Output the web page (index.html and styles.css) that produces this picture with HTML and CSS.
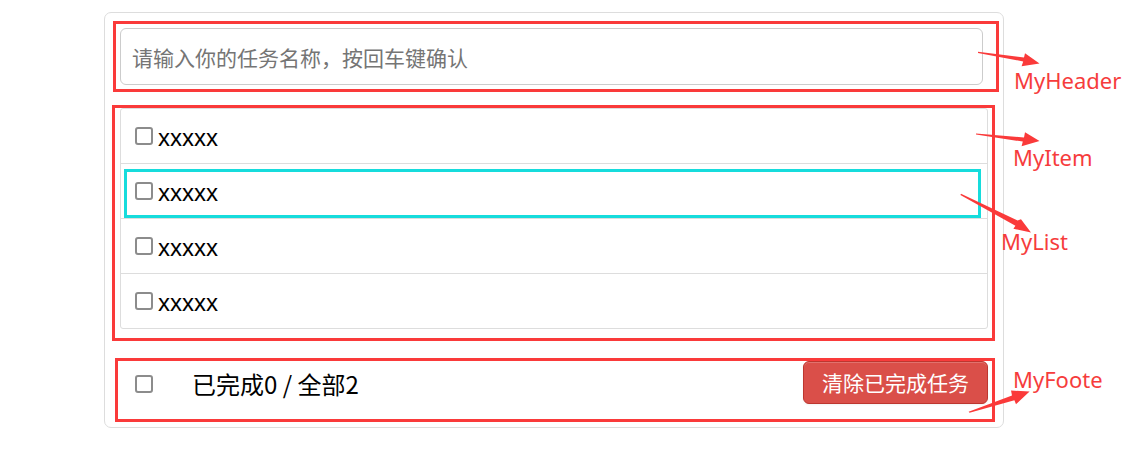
FILE: index.html
```html
<!DOCTYPE html>
<html lang="zh-CN">
<head>
<meta charset="utf-8">
<title>Todo List</title>
<link rel="stylesheet" href="styles.css">
</head>
<body>
<div class="page">
  <div class="todo-wrap">
    <div class="todo-header">
      <input class="todo-input" type="text" placeholder="请输入你的任务名称，按回车键确认">
    </div>
    <ul class="todo-main">
      <li class="todo-item"><input class="check" type="checkbox"><span class="item-text">xxxxx</span></li>
      <li class="todo-item"><input class="check" type="checkbox"><span class="item-text">xxxxx</span></li>
      <li class="todo-item"><input class="check" type="checkbox"><span class="item-text">xxxxx</span></li>
      <li class="todo-item"><input class="check" type="checkbox"><span class="item-text">xxxxx</span></li>
    </ul>
    <div class="todo-footer">
      <input class="check footer-check" type="checkbox">
      <span class="footer-text">已完成0 / 全部2</span>
      <button class="btn btn-danger" type="button">清除已完成任务</button>
    </div>
  </div>

  <div class="mark mark-header"></div>
  <div class="mark mark-list"></div>
  <div class="mark mark-footer"></div>
  <div class="mark-item"></div>

  <svg class="arrows" width="1147" height="455" viewBox="0 0 1147 455">
    <polygon points="978,51.8 1024,57.6 1025,53.2 1039.5,63.5 1021.6,66.2 1023.2,61.4 978,53"/>
    <polygon points="976,133.6 1024,137.4 1025,132.3 1039.5,141 1021.6,146.2 1022.8,141.6 976,134.6"/>
    <polygon points="961,193.8 1017.6,220.6 1021,219.2 1031,232.6 1013.4,228.8 1015.4,225.8 960.4,195"/>
    <polygon points="968.6,411.8 1012,395.4 1011,390.6 1029.6,391.6 1016,404.2 1014.4,400.2 969.6,412.8"/>
  </svg>

  <span class="label label-header">MyHeader</span>
  <span class="label label-item">MyItem</span>
  <span class="label label-list">MyList</span>
  <span class="label label-footer">MyFoote</span>
</div>
</body>
</html>
```

FILE: styles.css
```css
* {
  box-sizing: border-box;
}

html, body {
  margin: 0;
  padding: 0;
  background: #fff;
}

.page {
  position: relative;
  width: 1147px;
  height: 455px;
  overflow: hidden;
  padding-top: 12px;
  padding-left: 104px;
}

.todo-wrap {
  width: 900px;
  padding: 15px;
  border: 1px solid #ddd;
  border-radius: 7px;
}

/* header */
.todo-input {
  display: block;
  width: 863px;
  height: 57px;
  margin: 0;
  padding: 0 11px;
  border: 1px solid #ccc;
  border-radius: 6px;
  font-family: "Noto Sans CJK SC", "Noto Sans", sans-serif;
  font-size: 21px;
  color: #333;
  background: #fff;
  outline: none;
}

.todo-input::placeholder {
  color: #757575;
}

/* list */
.todo-main {
  list-style: none;
  margin: 23px 0 0 0;
  padding: 0;
  border: 1px solid #ddd;
  border-radius: 3px;
}

.todo-item {
  display: flex;
  align-items: center;
  height: 55px;
  padding: 0 7px 0 14px;
  border-bottom: 1px solid #ddd;
}

.todo-item:last-child {
  height: 54px;
  border-bottom: none;
}

.check {
  appearance: none;
  -webkit-appearance: none;
  flex: none;
  width: 18px;
  height: 18px;
  margin: 0;
  border: 2px solid #8c8c8c;
  border-radius: 3px;
  background: #fff;
}

.item-text {
  margin-left: 5px;
  margin-top: 3px;
  font-family: "Liberation Sans", Arial, sans-serif;
  font-size: 24px;
  color: #000;
}

/* footer */
.todo-footer {
  display: flex;
  align-items: center;
  height: 60px;
  margin-top: 23px;
  padding-left: 15px;
}

.footer-check {
  margin-top: 4px;
}

.footer-text {
  margin-left: 39px;
  margin-top: 2px;
  font-family: "Noto Sans CJK SC", "Noto Sans", sans-serif;
  font-size: 24px;
  color: #000;
}

.btn {
  align-self: flex-start;
  margin: 9px 0 0 auto;
  height: 43px;
  padding: 0 18px;
  font-family: "Noto Sans CJK SC", "Noto Sans", sans-serif;
  font-size: 21px;
  line-height: 41px;
  border-radius: 6px;
  cursor: pointer;
  box-shadow: inset 0 1px 0 rgba(255, 255, 255, 0.2), 0 1px 2px rgba(0, 0, 0, 0.05);
}

.btn-danger {
  color: #fff;
  background-color: #da4f49;
  border: 1px solid #bd362f;
}

/* annotations */
.mark {
  position: absolute;
  border: 3px solid #fa3a3a;
  pointer-events: none;
}

.mark-header {
  left: 113px;
  top: 21px;
  width: 886px;
  height: 71px;
}

.mark-list {
  left: 112px;
  top: 105px;
  width: 883px;
  height: 236px;
}

.mark-footer {
  left: 115px;
  top: 358px;
  width: 880px;
  height: 64px;
}

.mark-item {
  position: absolute;
  left: 124px;
  top: 169px;
  width: 857px;
  height: 49px;
  border: 3px solid #16dcdc;
  pointer-events: none;
}

.arrows {
  position: absolute;
  left: 0;
  top: 0;
  fill: #fa3a3a;
  pointer-events: none;
}

.label {
  position: absolute;
  font-family: "Noto Sans", "Open Sans", sans-serif;
  font-size: 22px;
  line-height: 22px;
  color: #f63c3c;
  white-space: nowrap;
}

.label-header {
  left: 1014px;
  top: 69px;
}

.label-item {
  left: 1013px;
  top: 146px;
}

.label-list {
  left: 1001px;
  top: 230px;
}

.label-footer {
  left: 1013px;
  top: 368px;
}
```
